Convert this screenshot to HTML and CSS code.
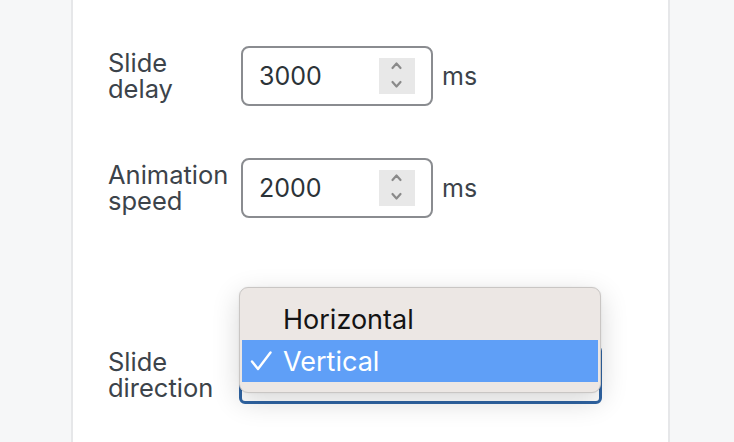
FILE: index.html
```html
<!DOCTYPE html>
<html lang="en">
<head>
<meta charset="utf-8">
<title>Slider settings</title>
<link rel="stylesheet" href="styles.css">
</head>
<body>
<div class="page">
  <div class="card">
    <div class="row">
      <label class="label"><span class="line">Slide</span><span class="line">delay</span></label>
      <div class="number">
        <span class="value">3000</span>
        <span class="spin">
          <svg width="36" height="36" viewBox="0 0 36 36"><path d="M13.5 10 L17.5 5.5 L21.5 10" fill="none" stroke="#8a8a8a" stroke-width="2.2" stroke-linecap="round" stroke-linejoin="round"/><path d="M13.5 24 L17.5 28.5 L21.5 24" fill="none" stroke="#8a8a8a" stroke-width="2.2" stroke-linecap="round" stroke-linejoin="round"/></svg>
        </span>
      </div>
      <span class="unit">ms</span>
    </div>
    <div class="row row2">
      <label class="label"><span class="line">Animation</span><span class="line">speed</span></label>
      <div class="number">
        <span class="value">2000</span>
        <span class="spin">
          <svg width="36" height="36" viewBox="0 0 36 36"><path d="M13.5 10 L17.5 5.5 L21.5 10" fill="none" stroke="#8a8a8a" stroke-width="2.2" stroke-linecap="round" stroke-linejoin="round"/><path d="M13.5 24 L17.5 28.5 L21.5 24" fill="none" stroke="#8a8a8a" stroke-width="2.2" stroke-linecap="round" stroke-linejoin="round"/></svg>
        </span>
      </div>
      <span class="unit">ms</span>
    </div>
    <div class="row row3">
      <label class="label"><span class="line">Slide</span><span class="line">direction</span></label>
      <div class="select-wrap">
        <div class="select"></div>
        <div class="popup">
          <div class="item"><span class="check"></span><span>Horizontal</span></div>
          <div class="item selected"><span class="check"><svg width="22" height="20" viewBox="0 0 22 20"><path d="M2 10.5 L8 18 L20.5 1.5" fill="none" stroke="#ffffff" stroke-width="2.4" stroke-linecap="round" stroke-linejoin="round"/></svg></span><span>Vertical</span></div>
        </div>
      </div>
    </div>
  </div>
</div>
</body>
</html>
```

FILE: styles.css
```css
html, body {
  margin: 0;
  padding: 0;
}
body {
  background: #f6f7f8;
  font-family: "Inter", "Noto Sans", sans-serif;
  color: #3c434a;
  width: 734px;
  height: 442px;
  overflow: hidden;
}
.page {
  padding-left: 71px;
}
.card {
  width: 599px;
  height: 442px;
  box-sizing: border-box;
  background: #ffffff;
  border-left: 2px solid #e6e7e9;
  border-right: 2px solid #e6e7e9;
  padding-top: 46px;
  padding-left: 35px;
}
.row {
  display: flex;
  align-items: center;
}
.row2 {
  margin-top: 52px;
}
.row3 {
  margin-top: 127px;
}
.label {
  width: 133px;
  display: flex;
  flex-direction: column;
  font-size: 25.5px;
  color: #3c434a;
}
.line {
  display: block;
  height: 26px;
  line-height: 26px;
}
.row3 .label {
  width: 131px;
}
.number {
  width: 192px;
  height: 60px;
  box-sizing: border-box;
  border: 2px solid #8a8c90;
  border-radius: 8px;
  display: flex;
  align-items: center;
  padding-left: 16px;
  padding-right: 16px;
}
.value {
  flex: 1;
  font-size: 25px;
  color: #2c3338;
}
.spin {
  width: 36px;
  height: 36px;
  background: #e8e8e8;
  display: flex;
}
.unit {
  margin-left: 9px;
  font-size: 25px;
  color: #3c434a;
}
.select-wrap {
  position: relative;
  width: 363px;
  height: 59px;
}
.select {
  width: 100%;
  height: 100%;
  box-sizing: border-box;
  border: 3px solid #2f64a3;
  border-radius: 6px;
  background: #ffffff;
}
.popup {
  position: absolute;
  left: 0;
  top: -58px;
  width: 362px;
  box-sizing: border-box;
  background: #ece7e4;
  border: 1px solid #c9c6c4;
  border-radius: 9px;
  padding: 10px 2px 10px 2px;
  box-shadow: 0 8px 28px rgba(0, 0, 0, 0.16), 0 0 2px rgba(0, 0, 0, 0.08);
}
.item {
  height: 42px;
  display: flex;
  align-items: center;
  font-size: 27px;
  color: #141414;
}
.item.selected {
  background: #5f9ff7;
  color: #ffffff;
}
.check {
  width: 41px;
  padding-left: 8px;
  box-sizing: border-box;
  display: flex;
  align-items: center;
}
```
